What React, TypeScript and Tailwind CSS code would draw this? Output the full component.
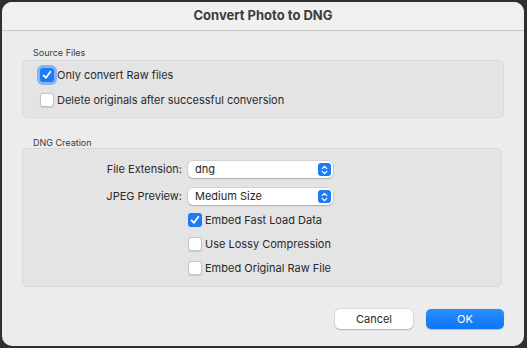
import React from "react";

const font = { fontFamily: "Inter, 'Noto Sans', 'Liberation Sans', sans-serif" };

function Check({ checked, focus }: { checked?: boolean; focus?: boolean }) {
  if (checked) {
    return (
      <span
        className={
          "flex h-[14px] w-[14px] shrink-0 items-center justify-center rounded-[3px] bg-[#1e7bf6] " +
          (focus ? "ring-[3px] ring-[#86b4f3]" : "")
        }
      >
        <svg width="10" height="10" viewBox="0 0 10 10">
          <path d="M1.6 5.4 L4 7.8 L8.4 1.8" fill="none" stroke="#fff" strokeWidth="1.8" strokeLinecap="round" strokeLinejoin="round" />
        </svg>
      </span>
    );
  }
  return (
    <span className="h-[14px] w-[14px] shrink-0 rounded-[3px] border border-[#c4c4c4] bg-white shadow-[0_0.5px_1px_rgba(0,0,0,0.12)]" />
  );
}

function Popup({ value }: { value: string }) {
  return (
    <div className="flex h-[17px] w-[145px] items-center justify-between rounded-[5px] bg-white pl-[7px] pr-[2px] shadow-[0_0_0_0.5px_rgba(0,0,0,0.15),0_1px_1.5px_rgba(0,0,0,0.18)]">
      <span className="text-[11px] leading-none text-[#262626]">{value}</span>
      <span className="flex h-[13px] w-[13px] items-center justify-center rounded-[3px] bg-[#1e7bf6]">
        <svg width="7" height="10" viewBox="0 0 7 10">
          <path d="M1.2 3.6 L3.5 1.4 L5.8 3.6 M1.2 6.4 L3.5 8.6 L5.8 6.4" fill="none" stroke="#fff" strokeWidth="1.3" strokeLinecap="round" strokeLinejoin="round" />
        </svg>
      </span>
    </div>
  );
}

export default function App() {
  return (
    <div className="h-[348px] w-[527px] bg-[#2f2f31] pb-[2px] pl-[2px] pr-[3px] pt-[2px]" style={font}>
      <div className="flex h-full flex-col overflow-hidden rounded-[10px] bg-[#ececec] text-[#2a2a2a]">
        {/* title bar */}
        <div className="flex h-[29px] shrink-0 items-center justify-center border-b border-[#c9c9c9] bg-[#f0f0ef]">
          <span className="text-[13px] font-bold text-[#3c3c3c]">Convert Photo to DNG</span>
        </div>

        <div className="flex flex-col px-[20px]">
          <div className="mt-[16px] pl-[11px] text-[9px] leading-[11px] text-[#3a3a3a]">Source Files</div>
          <div className="mt-[2px] flex h-[58px] flex-col gap-[9px] rounded-[5px] border border-[#d9d9d9] bg-[#e4e4e4] pl-[17px] pt-[6px]">
            <label className="flex h-[16px] items-center gap-[3px]">
              <Check checked focus />
              <span className="text-[11px]">Only convert Raw files</span>
            </label>
            <label className="flex h-[16px] items-center gap-[3px]">
              <Check />
              <span className="text-[11px]">Delete originals after successful conversion</span>
            </label>
          </div>

          <div className="mt-[19px] pl-[11px] text-[9px] leading-[11px] text-[#3a3a3a]">DNG Creation</div>
          <div className="mr-[2px] flex h-[139px] flex-col rounded-[5px] border border-[#d9d9d9] bg-[#e4e4e4] pt-[12px]">
            <div className="flex items-center gap-[6px]">
              <span className="w-[159px] text-right text-[11px]">File Extension:</span>
              <Popup value="dng" />
            </div>
            <div className="mt-[10px] flex items-center gap-[6px]">
              <span className="w-[159px] text-right text-[11px]">JPEG Preview:</span>
              <Popup value="Medium Size" />
            </div>
            <div className="ml-[165px] mt-[7px] flex flex-col gap-[8px]">
              <label className="flex h-[16px] items-center gap-[3px]">
                <Check checked />
                <span className="text-[11px]">Embed Fast Load Data</span>
              </label>
              <label className="flex h-[16px] items-center gap-[3px]">
                <Check />
                <span className="text-[11px]">Use Lossy Compression</span>
              </label>
              <label className="flex h-[16px] items-center gap-[3px]">
                <Check />
                <span className="text-[11px]">Embed Original Raw File</span>
              </label>
            </div>
          </div>

          <div className="mt-[22px] flex justify-end gap-[13px]">
            <button className="h-[20px] w-[78px] rounded-[5px] bg-white text-[11px] text-[#262626] shadow-[0_0_0_0.5px_rgba(0,0,0,0.15),0_1px_1.5px_rgba(0,0,0,0.18)]">
              Cancel
            </button>
            <button className="h-[20px] w-[78px] rounded-[5px] bg-gradient-to-b from-[#2a8cfd] to-[#0a76f5] text-[11px] text-white shadow-[0_0.5px_1px_rgba(0,0,0,0.2)]">
              OK
            </button>
          </div>
        </div>
      </div>
    </div>
  );
}
